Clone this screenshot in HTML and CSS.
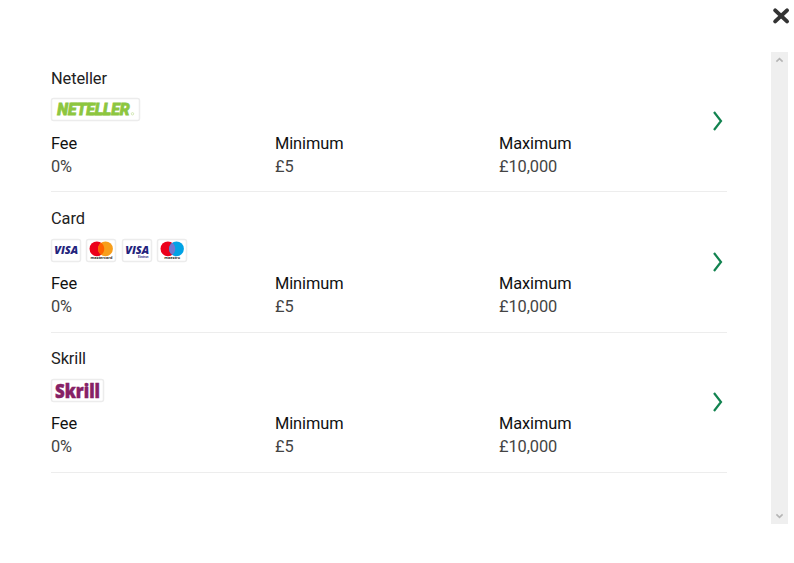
FILE: index.html
```html
<!DOCTYPE html>
<html lang="en">
<head>
    <meta charset="UTF-8">
    <meta name="viewport" content="width=device-width, initial-scale=1.0">
    <title>Deposit methods</title>
    <link rel="stylesheet" href="styles.css">
</head>
<body>
    <div class="modal">
        <header class="modalHeader">
            <button type="button" class="close" aria-label="Close">
                <svg width="18" height="17" viewBox="0 0 18 17"><path d="M3.2 3.4 15 14.4M15 3.4 3.2 14.4"/></svg>
            </button>
        </header>
        <div class="content">
            <main class="methods">
                <section class="method">
                    <div class="info">
                        <h2>Neteller</h2>
                        <div class="logos">
                            <svg class="logo" width="90" height="24" viewBox="0 0 90 24">
                                <rect class="frame" x=".5" y=".5" width="88" height="22" rx="2"/>
                                <text class="neteller" x="6.3" y="17" textLength="72.5" lengthAdjust="spacingAndGlyphs">NETELLER</text>
                                <path class="bar" d="M20 4.7h22l-.6 2.8H19.4zM39 14.4h20l-.6 2.8H38.4z"/>
                                <circle class="reg" cx="81.5" cy="15.8" r="1.2"/>
                            </svg>
                        </div>
                        <dl class="limits">
                            <div><dt>Fee</dt><dd>0%</dd></div>
                            <div><dt>Minimum</dt><dd>£5</dd></div>
                            <div><dt>Maximum</dt><dd>£10,000</dd></div>
                        </dl>
                    </div>
                    <svg class="arrow" width="12" height="22" viewBox="0 0 12 22"><path d="M2 2 9 11 2 20"/></svg>
                </section>
                <section class="method">
                    <div class="info">
                        <h2>Card</h2>
                        <div class="logos">
                            <svg class="logo" width="31" height="24" viewBox="0 0 31 24">
                                <rect class="frame" x=".5" y=".5" width="29" height="22" rx="2"/>
                                <text class="visa" x="3.2" y="15" textLength="24" lengthAdjust="spacingAndGlyphs">VISA</text>
                            </svg>
                            <svg class="logo" width="31" height="24" viewBox="0 0 31 24">
                                <rect class="frame" x=".5" y=".5" width="29" height="22" rx="2"/>
                                <circle cx="10.9" cy="9.8" r="7.4" fill="#eb001b"/>
                                <circle cx="19.5" cy="9.8" r="7.4" fill="#f79e1b"/>
                                <path d="M15.2 3.8a7.4 7.4 0 0 1 0 12 7.4 7.4 0 0 1 0-12z" fill="#ff5f00"/>
                                <text class="tiny" x="4.5" y="20.2" textLength="22" lengthAdjust="spacingAndGlyphs">mastercard</text>
                            </svg>
                            <svg class="logo" width="31" height="24" viewBox="0 0 31 24">
                                <rect class="frame" x=".5" y=".5" width="29" height="22" rx="2"/>
                                <text class="visa" x="3.2" y="15" textLength="24" lengthAdjust="spacingAndGlyphs">VISA</text>
                                <text class="tiny blue" x="16" y="18.8" textLength="10.5" lengthAdjust="spacingAndGlyphs">Electron</text>
                            </svg>
                            <svg class="logo" width="31" height="24" viewBox="0 0 31 24">
                                <rect class="frame" x=".5" y=".5" width="29" height="22" rx="2"/>
                                <circle cx="10.9" cy="9.8" r="7.4" fill="#eb001b"/>
                                <circle cx="19.5" cy="9.8" r="7.4" fill="#00a2e5"/>
                                <path d="M15.2 3.8a7.4 7.4 0 0 1 0 12 7.4 7.4 0 0 1 0-12z" fill="#7375cf"/>
                                <text class="tiny" x="7.2" y="20.2" textLength="16" lengthAdjust="spacingAndGlyphs">maestro</text>
                            </svg>
                        </div>
                        <dl class="limits">
                            <div><dt>Fee</dt><dd>0%</dd></div>
                            <div><dt>Minimum</dt><dd>£5</dd></div>
                            <div><dt>Maximum</dt><dd>£10,000</dd></div>
                        </dl>
                    </div>
                    <svg class="arrow" width="12" height="22" viewBox="0 0 12 22"><path d="M2 2 9 11 2 20"/></svg>
                </section>
                <section class="method">
                    <div class="info">
                        <h2>Skrill</h2>
                        <div class="logos">
                            <svg class="logo" width="54" height="24" viewBox="0 0 54 24">
                                <rect class="frame" x=".5" y=".5" width="52" height="22" rx="2"/>
                                <text class="skrill" x="4" y="18.8" textLength="45" lengthAdjust="spacingAndGlyphs">Skrill</text>
                            </svg>
                        </div>
                        <dl class="limits">
                            <div><dt>Fee</dt><dd>0%</dd></div>
                            <div><dt>Minimum</dt><dd>£5</dd></div>
                            <div><dt>Maximum</dt><dd>£10,000</dd></div>
                        </dl>
                    </div>
                    <svg class="arrow" width="12" height="22" viewBox="0 0 12 22"><path d="M2 2 9 11 2 20"/></svg>
                </section>
            </main>
            <div class="scrollbar">
                <svg width="9" height="6" viewBox="0 0 9 6"><path d="M1.4 4.6 4.5 1.6 7.6 4.6"/></svg>
                <svg width="9" height="6" viewBox="0 0 9 6"><path d="M1.4 1.4 4.5 4.4 7.6 1.4"/></svg>
            </div>
        </div>
    </div>
</body>
</html>
```
FILE: styles.css
```css
* {
    box-sizing: border-box;
}
body {
    margin: 0;
    background: #fff;
    color: #222;
    font-family: Roboto, Arial, sans-serif;
    font-size: 16.4px;
    line-height: 23px;
    letter-spacing: -.1px;
}
svg {
    display: block;
    overflow: visible;
    letter-spacing: 0;
}
.modal {
    height: 563px;
    overflow: hidden;
}
.modalHeader {
    display: flex;
    justify-content: flex-end;
    height: 52px;
    padding: 7px 4px 0 0;
}
.close {
    width: 18px;
    height: 17px;
    padding: 0;
    border: none;
    background: none;
    cursor: pointer;
}
.close path {
    fill: none;
    stroke: #333;
    stroke-width: 4;
    stroke-linecap: round;
}
.content {
    display: flex;
    justify-content: space-between;
    height: 472px;
    padding: 0 6px 0 51px;
}
.methods {
    width: 676px;
}
.method {
    display: flex;
    align-items: center;
    justify-content: space-between;
    height: 140.4px;
    padding-top: 1px;
    border-bottom: 1px solid #ededed;
}
.info {
    flex: 1;
}
h2 {
    margin: 0;
    font-size: 16.4px;
    font-weight: 400;
}
.logos {
    display: flex;
    gap: 4.4px;
    margin: 8.6px 0 9.4px;
}
.frame {
    fill: #fff;
    stroke: #ececec;
    stroke-width: 1.5;
}
.neteller {
    font: italic 900 16.5px Roboto, sans-serif;
    fill: #8dc63f;
    stroke: #8dc63f;
    stroke-width: .8;
}
.bar {
    fill: #8dc63f;
}
.reg {
    fill: none;
    stroke: #c3e09b;
    stroke-width: .7;
}
.visa {
    font: italic 800 11px "Open Sans", sans-serif;
    fill: #23237c;
}
.tiny {
    font: 700 4px "Open Sans", sans-serif;
    fill: #222;
}
.blue {
    font-size: 3.4px;
    fill: #23237c;
}
.skrill {
    font: 800 20px "Open Sans", sans-serif;
    fill: #862165;
    stroke: #862165;
    stroke-width: .5;
}
.limits {
    display: grid;
    grid-template-columns: 224px 224px 1fr;
    margin: 0;
}
dt {
    color: #111;
}
dd {
    margin: 0;
    color: #444;
}
.arrow {
    margin: 0 3px 2px 0;
}
.arrow path {
    fill: none;
    stroke: #128350;
    stroke-width: 2.2;
}
.scrollbar {
    display: flex;
    flex-direction: column;
    align-items: center;
    justify-content: space-between;
    width: 17px;
    padding: 5px 0;
    background: #efefef;
}
.scrollbar path {
    fill: none;
    stroke: #b5b5b5;
    stroke-width: 1.6;
}
```
